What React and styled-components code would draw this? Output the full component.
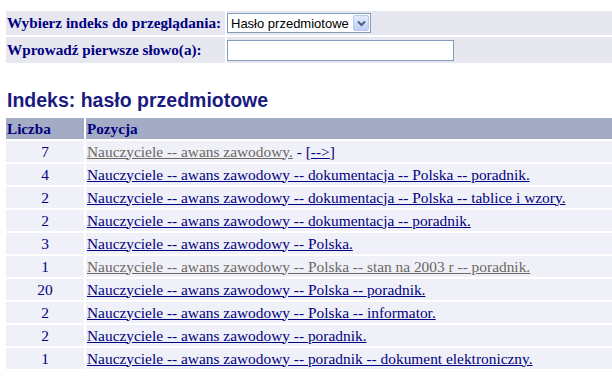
import React from 'react'
import styled, { createGlobalStyle } from 'styled-components'

const rows = [
  { n: 7, text: 'Nauczyciele -- awans zawodowy.', dim: true, more: true },
  { n: 4, text: 'Nauczyciele -- awans zawodowy -- dokumentacja -- Polska -- poradnik.' },
  { n: 2, text: 'Nauczyciele -- awans zawodowy -- dokumentacja -- Polska -- tablice i wzory.' },
  { n: 2, text: 'Nauczyciele -- awans zawodowy -- dokumentacja -- poradnik.' },
  { n: 3, text: 'Nauczyciele -- awans zawodowy -- Polska.' },
  { n: 1, text: 'Nauczyciele -- awans zawodowy -- Polska -- stan na 2003 r -- poradnik.', dim: true },
  { n: 20, text: 'Nauczyciele -- awans zawodowy -- Polska -- poradnik.' },
  { n: 2, text: 'Nauczyciele -- awans zawodowy -- Polska -- informator.' },
  { n: 2, text: 'Nauczyciele -- awans zawodowy -- poradnik.' },
  { n: 1, text: 'Nauczyciele -- awans zawodowy -- poradnik -- dokument elektroniczny.' },
]

const App = () => {
  return (
    <Page>
      <Global />
      <FormTable>
        <tbody>
          <tr>
            <LabelCell $h={24}>Wybierz indeks do przeglądania:</LabelCell>
            <FieldCell>
              <SelectBox>
                <Select defaultValue="subject">
                  <option value="subject">Hasło przedmiotowe</option>
                </Select>
                <DropButton>
                  <svg width="9" height="7" viewBox="0 0 9 7">
                    <path d="M1 1.5 L4.5 5 L8 1.5" fill="none" stroke="#4d6185" strokeWidth="2" />
                  </svg>
                </DropButton>
              </SelectBox>
            </FieldCell>
          </tr>
          <tr>
            <LabelCell $h={26}>Wprowadź pierwsze słowo(a):</LabelCell>
            <FieldCell>
              <TextInput type="text" />
            </FieldCell>
          </tr>
        </tbody>
      </FormTable>

      <Heading>Indeks: hasło przedmiotowe</Heading>

      <IndexTable>
        <thead>
          <tr>
            <Th $w={77}>Liczba</Th>
            <Th>Pozycja</Th>
          </tr>
        </thead>
        <tbody>
          {rows.map((r, i) => (
            <tr key={i}>
              <CountCell>{r.n}</CountCell>
              <EntryCell>
                <EntryLink href="#" $dim={r.dim}>{r.text}</EntryLink>
                {r.more && (
                  <>
                    {' '}-{' '}
                    <EntryLink href="#">[--&gt;]</EntryLink>
                  </>
                )}
              </EntryCell>
            </tr>
          ))}
        </tbody>
      </IndexTable>
    </Page>
  )
}

const Global = createGlobalStyle`
  html, body {
    margin: 0;
    padding: 0;
    background: #fff;
    overflow: hidden;
  }
`

const Page = styled.div`
  width: 612px;
  padding-left: 4px;
  font-family: "Liberation Serif", "Times New Roman", serif;
  color: #000080;
`

const FormTable = styled.table`
  width: 612px;
  margin-top: 9px;
  border-spacing: 2px;
  border-collapse: separate;

  td {
    background: #e7e7ef;
    padding: 0;
  }
`

const LabelCell = styled.td`
  width: 218px;
  height: ${p => p.$h}px;
  padding-left: 1px !important;
  font-size: 15.2px;
  font-weight: bold;
  color: #000080;
  white-space: nowrap;
  vertical-align: middle;
`

const FieldCell = styled.td`
  vertical-align: middle;
`

const SelectBox = styled.div`
  position: relative;
  width: 144px;
  height: 20px;
  box-sizing: border-box;
  border: 1px solid #7f9db9;
  background: #fff;
`

const Select = styled.select`
  appearance: none;
  -webkit-appearance: none;
  border: 0;
  outline: 0;
  background: transparent;
  width: 100%;
  height: 18px;
  padding: 0 0 0 3px;
  font-family: "Liberation Sans", Arial, sans-serif;
  font-size: 13px;
  color: #000;
`

const DropButton = styled.span`
  position: absolute;
  top: 1px;
  right: 1px;
  width: 16px;
  height: 16px;
  box-sizing: border-box;
  border: 1px solid #b7c7e6;
  border-radius: 2px;
  background: linear-gradient(#e3ebfc, #bfd0f5);
  display: flex;
  align-items: center;
  justify-content: center;
`

const TextInput = styled.input`
  display: block;
  width: 227px;
  height: 21px;
  box-sizing: border-box;
  border: 1px solid #7f9db9;
  background: #fff;
  margin: 0;
  padding: 0 3px;
  outline: 0;
`

const Heading = styled.h2`
  margin: 23px 0 4px 3px;
  height: 24px;
  line-height: 24px;
  font-family: "Liberation Sans", Arial, sans-serif;
  font-size: 19.5px;
  font-weight: bold;
  color: #1a1a80;
`

const IndexTable = styled.table`
  width: 612px;
  border-spacing: 2px;
  border-collapse: separate;
  font-size: 15.4px;
`

const Th = styled.th`
  width: ${p => (p.$w ? `${p.$w}px` : 'auto')};
  height: 21px;
  padding: 0 0 0 1px;
  background: #a4abc5;
  text-align: left;
  font-weight: bold;
  font-size: 15.2px;
  color: #000080;
  vertical-align: middle;
`

const CountCell = styled.td`
  height: 21px;
  padding: 0;
  background: #f0f0f8;
  text-align: center;
  color: #000080;
  vertical-align: middle;
`

const EntryCell = styled.td`
  height: 21px;
  padding: 0 0 0 1px;
  background: #f0f0f8;
  color: #000080;
  white-space: nowrap;
  vertical-align: middle;
`

const EntryLink = styled.a`
  color: ${p => (p.$dim ? '#6b6862' : '#000080')};
  text-decoration: underline;
`

export default App
